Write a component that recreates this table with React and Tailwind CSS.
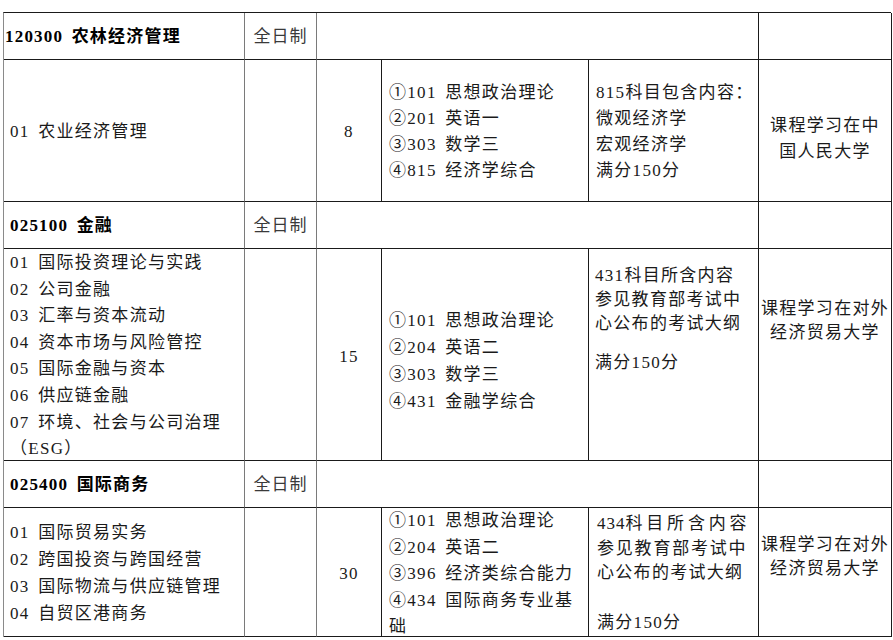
const serif = { fontFamily: '"Liberation Serif", "Noto Sans CJK SC", serif' }

function Lines({ items, className = '' }) {
  return (
    <div className={className}>
      {items.map((t, i) => (
        <div key={i} className="whitespace-nowrap">{t}</div>
      ))}
    </div>
  )
}

function HeaderRow({ code, name, first }) {
  return (
    <>
      <div className={`h-[47px] flex items-center pt-[2px] border-r border-b border-r-[#7a7a7a] border-b-[#1a1a1a] ${first ? 'pl-[1px]' : 'pl-[6px]'}`}>
        <span className="font-bold text-[17px] tracking-[1.2px] text-black">
          {code} {name}
        </span>
      </div>
      <div className="h-[47px] flex items-center justify-center pt-[2px] border-r border-b border-r-[#7a7a7a] border-b-[#1a1a1a]">
        <span className="text-[17px] tracking-[1px] text-[#3a3a3a]">全日制</span>
      </div>
      <div className="col-span-3 h-[47px] border-r border-b border-[#1a1a1a]" />
      <div className="h-[47px] border-r border-b border-[#1a1a1a]" />
    </>
  )
}

export default function App() {
  return (
    <div className="w-[893px] h-[640px] bg-white overflow-hidden text-[#1a1a1a]" style={serif}>
      <div className="ml-[3px] mt-[12px] w-[888px] grid grid-cols-[241px_72px_65px_207px_170px_133px] border-l border-t border-l-[#8a8a8a] border-t-[#1a1a1a] text-[17px] tracking-[1.3px] [word-spacing:3px]">
        <HeaderRow code="120300" name="农林经济管理" first />

        {/* 农业经济管理 */}
        <div className="h-[142px] flex items-center pl-[6px] pt-[2px] border-r border-b border-r-[#7a7a7a] border-b-[#1a1a1a] leading-[26px]">
          <span className="whitespace-nowrap">01 农业经济管理</span>
        </div>
        <div className="h-[142px] border-r border-b border-r-[#7a7a7a] border-b-[#1a1a1a]" />
        <div className="h-[142px] flex items-center justify-center pt-[2px] border-r border-b border-[#1a1a1a]">8</div>
        <div className="h-[142px] flex items-center pl-[7px] pt-[2px] border-r border-b border-[#1a1a1a] leading-[26px]">
          <Lines items={['①101 思想政治理论', '②201 英语一', '③303 数学三', '④815 经济学综合']} />
        </div>
        <div className="h-[142px] flex items-center pl-[7px] pt-[2px] border-r border-b border-[#1a1a1a] leading-[26px]">
          <Lines items={['815科目包含内容：', '微观经济学', '宏观经济学', '满分150分']} />
        </div>
        <div className="h-[142px] pt-[53px] text-center border-r border-b border-[#1a1a1a] leading-[26px]">
          <Lines items={['课程学习在中', '国人民大学']} />
        </div>

        <HeaderRow code="025100" name="金融" />

        {/* 金融 */}
        <div className="h-[212px] pl-[6px] pt-[1px] border-r border-b border-r-[#7a7a7a] border-b-[#1a1a1a] leading-[26.6px]">
          <Lines
            items={[
              '01 国际投资理论与实践',
              '02 公司金融',
              '03 汇率与资本流动',
              '04 资本市场与风险管控',
              '05 国际金融与资本',
              '06 供应链金融',
              '07 环境、社会与公司治理',
              '（ESG）',
            ]}
          />
        </div>
        <div className="h-[212px] border-r border-b border-r-[#7a7a7a] border-b-[#1a1a1a]" />
        <div className="h-[212px] flex items-center justify-center pt-[4px] border-r border-b border-[#1a1a1a]">15</div>
        <div className="h-[212px] flex items-center pl-[7px] pt-[12px] border-r border-b border-[#1a1a1a] leading-[27px]">
          <Lines items={['①101 思想政治理论', '②204 英语二', '③303 数学三', '④431 金融学综合']} />
        </div>
        <div className="h-[212px] pl-[6px] pt-[15px] border-r border-b border-[#1a1a1a] leading-[24px]">
          <Lines items={['431科目所含内容', '参见教育部考试中', '心公布的考试大纲']} />
          <div className="mt-[15px] whitespace-nowrap">满分150分</div>
        </div>
        <div className="h-[212px] pt-[48px] text-center border-r border-b border-[#1a1a1a] leading-[24px]">
          <Lines items={['课程学习在对外', '经济贸易大学']} />
        </div>

        <HeaderRow code="025400" name="国际商务" />

        {/* 国际商务 */}
        <div className="h-[129px] flex items-center pl-[6px] pt-[2px] border-r border-b border-r-[#7a7a7a] border-b-[#1a1a1a] leading-[27px]">
          <Lines items={['01 国际贸易实务', '02 跨国投资与跨国经营', '03 国际物流与供应链管理', '04 自贸区港商务']} />
        </div>
        <div className="h-[129px] border-r border-b border-r-[#7a7a7a] border-b-[#1a1a1a]" />
        <div className="h-[129px] flex items-center justify-center pt-[4px] border-r border-b border-[#1a1a1a]">30</div>
        <div className="h-[129px] pl-[7px] border-r border-b border-[#1a1a1a] leading-[26.5px]">
          <Lines items={['①101 思想政治理论', '②204 英语二', '③396 经济类综合能力', '④434 国际商务专业基', '础']} />
        </div>
        <div className="h-[129px] pl-[8px] pt-[4px] border-r border-b border-[#1a1a1a] leading-[24.5px]">
          <div className="whitespace-nowrap">
            <span className="tracking-[1px]">434</span>
            <span className="tracking-[3.8px]">科目所含内容</span>
          </div>
          <div className="whitespace-nowrap tracking-[1.8px]">参见教育部考试中</div>
          <div className="whitespace-nowrap">心公布的考试大纲</div>
          <div className="mt-[25px] whitespace-nowrap">满分150分</div>
        </div>
        <div className="h-[129px] pt-[25px] text-center border-r border-b border-[#1a1a1a] leading-[24px]">
          <Lines items={['课程学习在对外', '经济贸易大学']} />
        </div>
      </div>
    </div>
  )
}
